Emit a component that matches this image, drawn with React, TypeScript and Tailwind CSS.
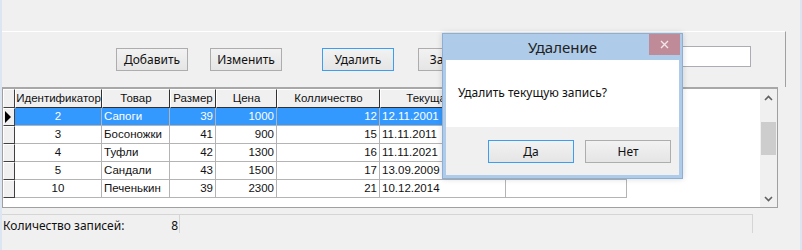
import React from 'react';

const cols = [
  { name: 'Идентификатор', w: 87, align: 'center' },
  { name: 'Товар', w: 68, align: 'left' },
  { name: 'Размер', w: 46, align: 'right' },
  { name: 'Цена', w: 61, align: 'right' },
  { name: 'Колличество', w: 103, align: 'right' },
  { name: 'Текущая дата', w: 126, align: 'left' },
  { name: 'Примечание', w: 121, align: 'left' },
];

const rows = [
  ['2', 'Сапоги', '39', '1000', '12', '12.11.2001', ''],
  ['3', 'Босоножки', '41', '900', '15', '11.11.2011', ''],
  ['4', 'Туфли', '42', '1300', '16', '11.11.2021', ''],
  ['5', 'Сандали', '43', '1500', '17', '13.09.2009', ''],
  ['10', 'Печенькин', '39', '2300', '21', '10.12.2014', ''],
];

const alignClass: Record<string, string> = {
  center: 'justify-center',
  left: 'justify-start pl-[2px]',
  right: 'justify-end pr-[2px]',
};

const WinButton: React.FC<{ label: string; focused?: boolean; w?: string }> = ({ label, focused, w = 'w-[72px]' }) => (
  <div
    className={`${w} h-[23px] flex items-center justify-center text-[12px] text-[#111] bg-gradient-to-b from-[#f2f2f2] to-[#e5e5e5] border ${
      focused ? 'border-[#3c9ef0]' : 'border-[#adadad]'
    }`}
  >
    {label}
  </div>
);

export default function App() {
  return (
    <div
      className="relative w-[802px] h-[250px] overflow-hidden bg-[#f0f0f0] border-l-2 border-r-2 border-l-[#dbe6f2] border-r-[#dbe6f2]"
      style={{ fontFamily: '"Noto Sans", "Liberation Sans", sans-serif' }}
    >
      <div className="h-[31px]" />

      {/* Top panel with buttons */}
      <div className="w-[784px] h-[56px] border-t border-t-white border-r border-r-[#a0a0a0] flex pl-[114px] pt-[16px]">
        <WinButton label="Добавить" />
        <div className="ml-[22px]">
          <WinButton label="Изменить" />
        </div>
        <div className="ml-[40px]">
          <WinButton label="Удалить" focused />
        </div>
        <div className="ml-[24px]">
          <WinButton label="Закрыть" />
        </div>
        <div className="ml-[190px] -mt-[2px] w-[71px] h-[21px] bg-white border border-[#abadb3]" />
      </div>

      {/* Grid */}
      <div
        className="w-[776px] h-[121px] bg-white border border-[#a0a0a0] border-t-2 border-t-[#a8a8a8] flex"
        style={{ fontFamily: '"Liberation Sans", Arial, sans-serif' }}
      >
        <div className="flex-1 flex flex-col text-[11.5px]">
          {/* header */}
          <div className="flex h-[19px]">
            <div className="w-[12px] bg-[#f0f0f0] border-r border-b border-r-[#404040] border-b-[#404040] border-t border-l border-t-white border-l-white" />
            {cols.map((c) => (
              <div
                key={c.name}
                style={{ width: c.w }}
                className="shrink-0 bg-[#f0f0f0] border-r border-b border-r-[#303030] border-b-[#303030] border-t border-t-white border-l border-l-white flex items-center justify-center text-[#111] overflow-hidden whitespace-nowrap"
              >
                {c.name}
              </div>
            ))}
          </div>
          {rows.map((r, i) => (
            <div key={i} className="flex h-[18px]">
              <div className="w-[12px] bg-[#f0f0f0] border-t border-l border-t-white border-l-white border-r border-b border-r-[#404040] border-b-[#404040] flex items-center">
                {i === 0 && (
                  <svg width="8" height="12" viewBox="0 0 8 12">
                    <path d="M1 0 L7 6 L1 12 Z" fill="#000" />
                  </svg>
                )}
              </div>
              {r.map((v, j) => (
                <div
                  key={j}
                  style={{ width: cols[j].w }}
                  className={`shrink-0 flex items-center border-r border-b border-[#b4b4b4] whitespace-nowrap overflow-hidden ${
                    alignClass[cols[j].align]
                  } ${i === 0 && j < 6 ? 'bg-[#3399ff] text-white border-[#a8c8ea]' : 'text-[#111]'}`}
                >
                  {v}
                </div>
              ))}
            </div>
          ))}
        </div>
        {/* scrollbar */}
        <div className="w-[17px] bg-[#f0f0f0] flex flex-col items-center">
          <div className="h-[17px] flex items-center justify-center">
            <svg width="9" height="6" viewBox="0 0 9 6">
              <path d="M1 5 L4.5 1.5 L8 5" stroke="#606060" strokeWidth="1.6" fill="none" />
            </svg>
          </div>
          <div className="mt-[16px] w-[15px] h-[33px] bg-[#cdcdcd]" />
          <div className="flex-1" />
          <div className="h-[17px] flex items-center justify-center">
            <svg width="9" height="6" viewBox="0 0 9 6">
              <path d="M1 1 L4.5 4.5 L8 1" stroke="#606060" strokeWidth="1.6" fill="none" />
            </svg>
          </div>
        </div>
      </div>

      {/* Status bar */}
      <div className="mt-[6px] w-[751px] h-[18px] border-t border-[#d5d5d5] flex text-[12px] text-[#111]">
        <div className="w-[178px] flex items-center justify-between pl-[1px] pr-[1px] pt-[4px] border-r border-[#d5d5d5] h-[18px]">
          <span>Количество записей:</span>
          <span>8</span>
        </div>
        <div className="flex-1 border-r border-[#d5d5d5] h-[18px]" />
      </div>

      {/* Dialog */}
      <div className="absolute left-[440px] top-[33px] w-[241px] h-[146px] bg-[#aecbe9] border border-[#8eaed2] flex flex-col shadow-[0_0_6px_rgba(0,0,0,0.15)]">
        <div className="h-[26px] flex items-center relative">
          <div className="flex-1 text-center text-[15px] text-[#222]">Удаление</div>
          <div className="absolute right-[2px] top-0 w-[31px] h-[21px] bg-[#c08b98] flex items-center justify-center">
            <svg width="9" height="9" viewBox="0 0 9 9">
              <path d="M1 1 L8 8 M8 1 L1 8" stroke="#f2e6ea" strokeWidth="1.4" />
            </svg>
          </div>
        </div>
        <div className="mx-[3px] mb-[3px] flex-1 flex flex-col">
          <div className="h-[67px] bg-white pl-[12px] pt-[24px] text-[12px] text-[#111]">Удалить текущую запись?</div>
          <div className="flex-1 bg-[#f0f0f0] flex gap-[11px] pl-[42px] pt-[13px]">
            <WinButton label="Да" focused w="w-[86px]" />
            <WinButton label="Нет" w="w-[86px]" />
          </div>
        </div>
      </div>
    </div>
  );
}
